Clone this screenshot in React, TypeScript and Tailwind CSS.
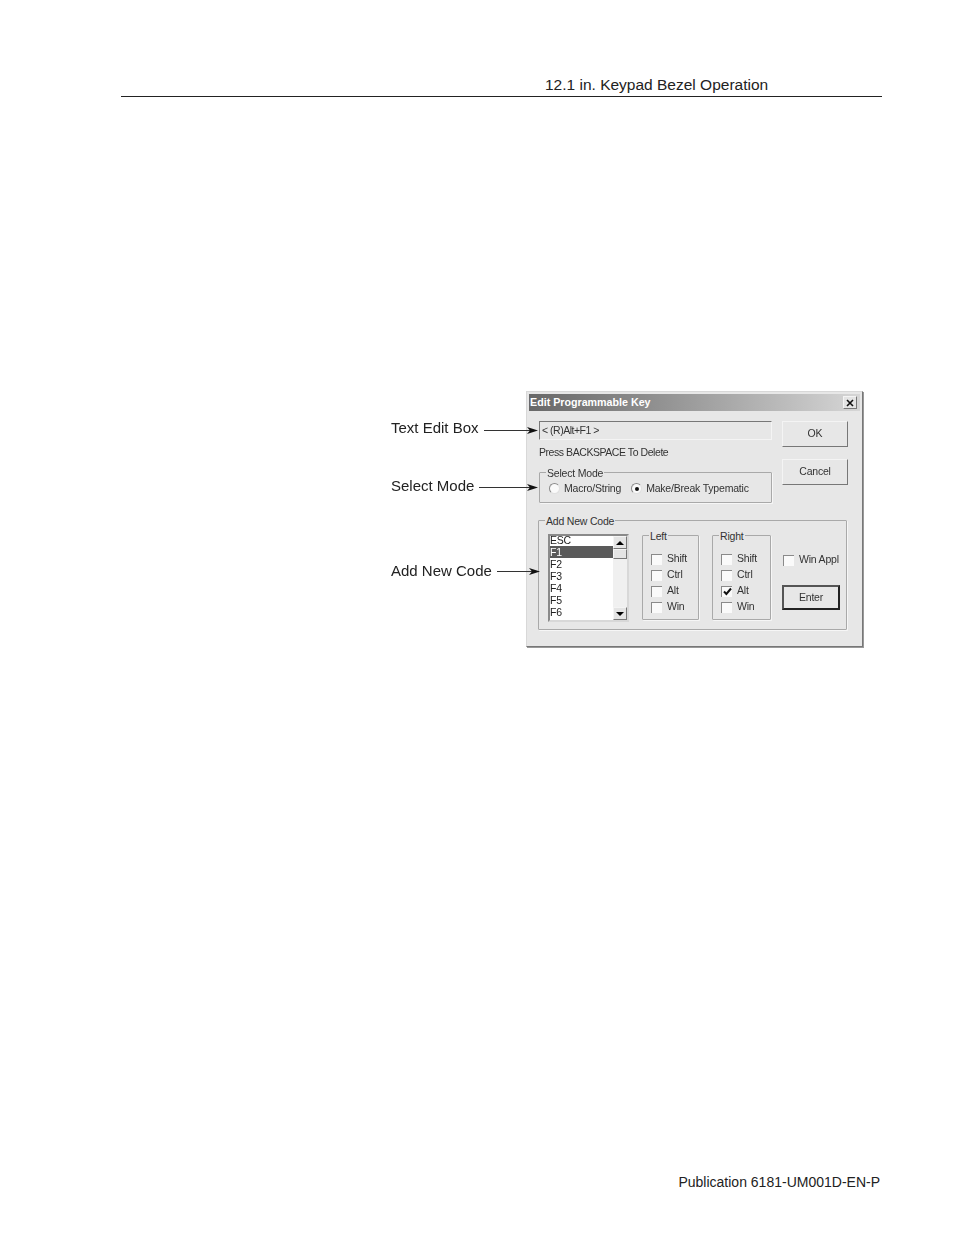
import React from 'react';

const raised = 'border border-t-[#f4f4f4] border-l-[#f4f4f4] border-r-[#777777] border-b-[#777777]';

function Arrow({ width, className }: { width: number; className?: string }) {
  return (
    <svg width={width} height="9" viewBox={`0 0 ${width} 9`} className={`block shrink-0 ${className ?? ''}`}>
      <line x1="0" y1="4.5" x2={width - 6} y2="4.5" stroke="#333333" strokeWidth="1" />
      <path d={`M${width - 11} 1 L${width} 4.5 L${width - 11} 8 L${width - 8} 4.5 Z`} fill="#111111" />
    </svg>
  );
}

function Callout({ label, width, top, arrowClass }: { label: string; width: number; top: string; arrowClass?: string }) {
  return (
    <div className={`flex items-center gap-[5px] h-[18px] text-[15px] text-[#222222] ${top}`}>
      <span className="whitespace-nowrap">{label}</span>
      <Arrow width={width} className={arrowClass} />
    </div>
  );
}

function Group({ title, className, children }: { title: string; className: string; children?: React.ReactNode }) {
  return (
    <div className={`relative rounded-[1px] border border-[#a9a9a9] shadow-[1px_1px_0_#f6f6f6] ${className}`}>
      <span className="absolute left-[6px] top-[-6px] bg-[#e7e7e7] px-[1px] leading-[12px] whitespace-nowrap">{title}</span>
      {children}
    </div>
  );
}

function Check({ label, checked }: { label: string; checked?: boolean }) {
  return (
    <div className="flex items-center h-[16px] whitespace-nowrap">
      <span className="flex items-center justify-center w-[11px] h-[11px] bg-[#fafafa] border-t border-l border-t-[#8a8a8a] border-l-[#8a8a8a] shrink-0">
        {checked && (
          <svg width="9" height="9" viewBox="0 0 9 9">
            <path d="M1 4.5 L3.4 7 L8 1.5" fill="none" stroke="#111111" strokeWidth="2" />
          </svg>
        )}
      </span>
      <span className="ml-[5px]">{label}</span>
    </div>
  );
}

function Radio({ label, checked }: { label: string; checked?: boolean }) {
  return (
    <div className="flex items-center whitespace-nowrap">
      <span className="flex items-center justify-center w-[11px] h-[11px] rounded-full bg-[#fafafa] border border-t-[#8a8a8a] border-l-[#8a8a8a] border-r-[#e0e0e0] border-b-[#e0e0e0]">
        {checked && <span className="w-[4px] h-[4px] rounded-full bg-[#111111]" />}
      </span>
      <span className="ml-[4px]">{label}</span>
    </div>
  );
}

function ScrollButton({ up }: { up?: boolean }) {
  return (
    <div className={`flex items-center justify-center w-[14px] h-[13px] shrink-0 bg-[#e4e4e4] ${raised}`}>
      <span className={`w-0 h-0 border-x-[4px] border-x-transparent ${up ? 'border-b-[4px] border-b-black' : 'border-t-[4px] border-t-black'}`} />
    </div>
  );
}

const keys = ['ESC', 'F1', 'F2', 'F3', 'F4', 'F5', 'F6', 'F7'];

function Dialog() {
  return (
    <div className="w-[337px] h-[256px] bg-[#e7e7e7] p-[2px] border border-[#d8d8d8] border-r-[#777777] border-b-[#777777] shadow-[1px_1px_0_#999999] text-[10.5px] tracking-[-0.2px] text-[#333333] blur-[0.45px]">
      <div className="flex items-center justify-between h-[17px] pl-[1px] pr-[3px] bg-gradient-to-r from-[#686868] to-[#d6d6d6]">
        <span className="text-[10.7px] tracking-normal font-bold text-white whitespace-nowrap">Edit Programmable Key</span>
        <span className={`flex items-center justify-center w-[14px] h-[13px] bg-[#e4e4e4] ${raised}`}>
          <svg width="8" height="8" viewBox="0 0 8 8">
            <path d="M1 1 L7 7 M7 1 L1 7" stroke="#111111" strokeWidth="1.6" />
          </svg>
        </span>
      </div>

      <div className="pl-[10px] pt-[10px]">
        <div className="flex">
          <div className="w-[233px]">
            <div className="flex items-center h-[19px] pl-[2px] border border-t-[#777777] border-l-[#777777] border-r-[#f4f4f4] border-b-[#f4f4f4] tracking-[-0.5px] whitespace-nowrap">
              {'< (R)Alt+F1 >'}
            </div>
            <div className="h-[12px] mt-[6px] tracking-[-0.44px] leading-[12px] whitespace-nowrap">Press BACKSPACE To Delete</div>
            <Group title="Select Mode" className="h-[31px] mt-[14px]">
              <div className="flex items-center gap-[10px] pl-[9px] pt-[8px]">
                <Radio label="Macro/String" />
                <Radio label="Make/Break Typematic" checked />
              </div>
            </Group>
          </div>
          <div className="ml-[10px] w-[66px] flex flex-col gap-[12px]">
            <div className={`flex items-center justify-center h-[26px] ${raised}`}>OK</div>
            <div className={`flex items-center justify-center h-[26px] ${raised}`}>Cancel</div>
          </div>
        </div>

        <Group title="Add New Code" className="w-[309px] h-[110px] mt-[17px] -ml-[1px]">
          <div className="flex pl-[9px] pt-[13px]">
            <div className="flex w-[81px] h-[88px] bg-white border-2 border-t-[#8a8a8a] border-l-[#8a8a8a] border-r-[#d8d8d8] border-b-[#d8d8d8] overflow-hidden">
              <div className="w-[65px] -mt-[2px] leading-[12px] text-[#222222]">
                {keys.map((key) => (
                  <div key={key} className={`h-[12px] ${key === 'F1' ? 'bg-[#5a5a5a] text-white' : ''}`}>{key}</div>
                ))}
              </div>
              <div className="flex flex-col flex-1 bg-[#f0f0f0]">
                <ScrollButton up />
                <div className={`h-[10px] shrink-0 bg-[#e4e4e4] ${raised}`} />
                <div className="flex-1" />
                <ScrollButton />
              </div>
            </div>

            <Group title="Left" className="w-[57px] h-[85px] ml-[13px] mt-[1px] pl-[8px] pt-[15px]">
              <Check label="Shift" />
              <Check label="Ctrl" />
              <Check label="Alt" />
              <Check label="Win" />
            </Group>

            <Group title="Right" className="w-[59px] h-[85px] ml-[13px] mt-[1px] pl-[8px] pt-[15px]">
              <Check label="Shift" />
              <Check label="Ctrl" />
              <Check label="Alt" checked />
              <Check label="Win" />
            </Group>

            <div className="ml-[12px] pt-[18px]">
              <Check label="Win Appl" />
              <div className="flex items-center justify-center w-[58px] h-[25px] mt-[17px] -ml-[1px] border-2 border-t-[#555555] border-l-[#555555] border-r-[#222222] border-b-[#222222]">Enter</div>
            </div>
          </div>
        </Group>
      </div>
    </div>
  );
}

export default function App() {
  return (
    <div className="w-[954px] h-[1235px] bg-white flex flex-col font-['Liberation_Sans',Arial,sans-serif] text-[#222222]">
      <header className="ml-[121px] w-[761px] h-[97px] border-b border-[#222222] pl-[424px] pt-[76px] text-[15.5px] leading-[18px] whitespace-nowrap">
        12.1 in. Keypad Bezel Operation
      </header>

      <div className="flex flex-1 ml-[391px] pt-[294px]">
        <div className="relative z-10 w-[135px]">
          <Callout label="Text Edit Box" width={54} top="mt-[28px]" arrowClass="mt-[4px]" />
          <Callout label="Select Mode" width={59} top="mt-[40px]" arrowClass="mt-[2px]" />
          <Callout label="Add New Code" width={43} top="mt-[67px]" />
        </div>
        <Dialog />
      </div>

      <footer className="pr-[74px] pb-[44px] text-right text-[14px] leading-[18px]">Publication 6181-UM001D-EN-P</footer>
    </div>
  );
}
